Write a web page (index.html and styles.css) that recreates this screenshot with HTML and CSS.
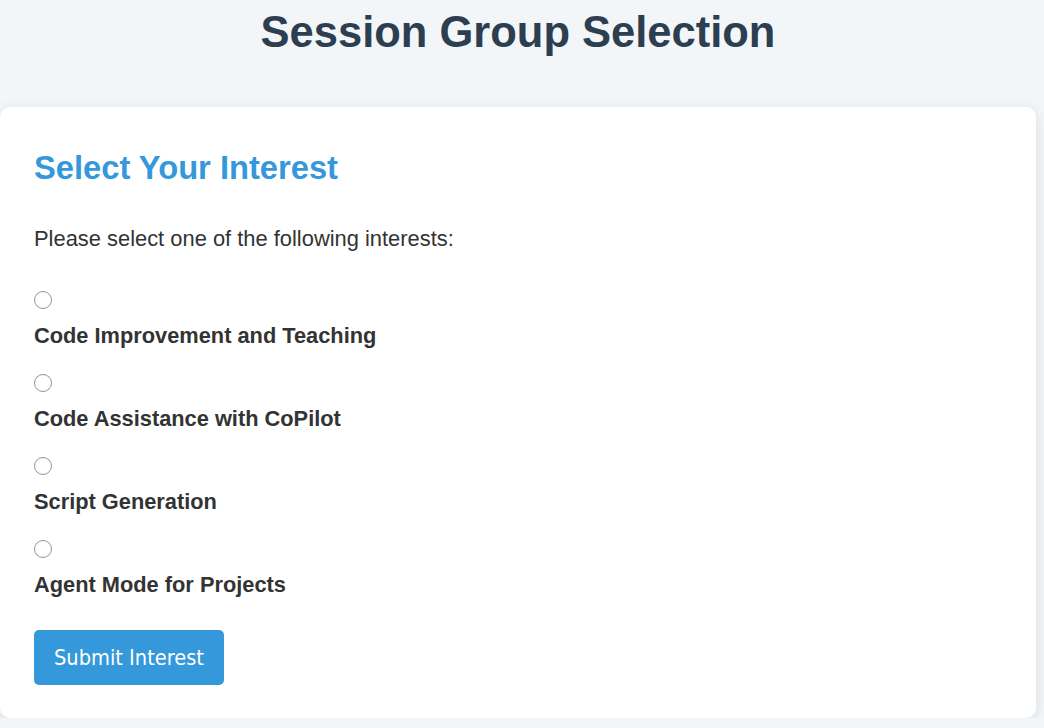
FILE: index.html
```html
<!DOCTYPE html>
<html lang="en">
<head>
<meta charset="utf-8">
<title>Session Group Selection</title>
<link rel="stylesheet" href="styles.css">
</head>
<body>
<div class="page">
  <h1 class="title">Session Group Selection</h1>
  <form class="card">
    <h2 class="card-title">Select Your Interest</h2>
    <p class="intro">Please select one of the following interests:</p>
    <div class="options">
      <div class="option">
        <input class="radio" type="radio" name="interest" id="i1">
        <label class="option-label" for="i1">Code Improvement and Teaching</label>
      </div>
      <div class="option">
        <input class="radio" type="radio" name="interest" id="i2">
        <label class="option-label" for="i2">Code Assistance with CoPilot</label>
      </div>
      <div class="option">
        <input class="radio" type="radio" name="interest" id="i3">
        <label class="option-label" for="i3">Script Generation</label>
      </div>
      <div class="option">
        <input class="radio" type="radio" name="interest" id="i4">
        <label class="option-label" for="i4">Agent Mode for Projects</label>
      </div>
    </div>
    <button class="submit" type="button">Submit Interest</button>
  </form>
</div>
</body>
</html>
```

FILE: styles.css
```css
html, body {
  margin: 0;
  padding: 0;
}

body {
  background: #f3f6f9;
  font-family: "Liberation Sans", Arial, sans-serif;
  color: #333333;
}

.page {
  width: 1036px;
  display: flex;
  flex-direction: column;
}

.title {
  margin: 0 0 51px;
  padding-top: 8px;
  font-size: 43.5px;
  line-height: 48px;
  font-weight: bold;
  text-align: center;
  color: #2c3e50;
}

.card {
  background: #ffffff;
  border-radius: 10px;
  box-shadow: 0 3px 14px rgba(0, 0, 0, 0.1);
  padding: 41.5px 34px 33px;
  display: flex;
  flex-direction: column;
  align-items: flex-start;
}

.card-title {
  margin: 0 0 40.5px;
  font-size: 32.7px;
  line-height: 37px;
  font-weight: bold;
  color: #3498db;
}

.intro {
  margin: 0 0 40px;
  font-size: 21.9px;
  line-height: 25px;
  color: #333333;
}

.options {
  display: flex;
  flex-direction: column;
  gap: 26.3px;
}

.option {
  display: flex;
  flex-direction: column;
  align-items: flex-start;
  gap: 13.7px;
}

.radio {
  appearance: none;
  -webkit-appearance: none;
  margin: 0;
  width: 18px;
  height: 18px;
  border: 1.3px solid #959595;
  border-radius: 50%;
  background: #ffffff;
  box-sizing: border-box;
}

.option-label {
  font-size: 21.8px;
  line-height: 25px;
  font-weight: bold;
  color: #333333;
}

.submit {
  margin-top: 33.4px;
  border: none;
  border-radius: 5px;
  background: #3498db;
  color: #ffffff;
  font-family: "DejaVu Sans Condensed", "DejaVu Sans", sans-serif;
  font-size: 21.6px;
  line-height: 25px;
  padding: 15px 20px;
  cursor: pointer;
}
```
